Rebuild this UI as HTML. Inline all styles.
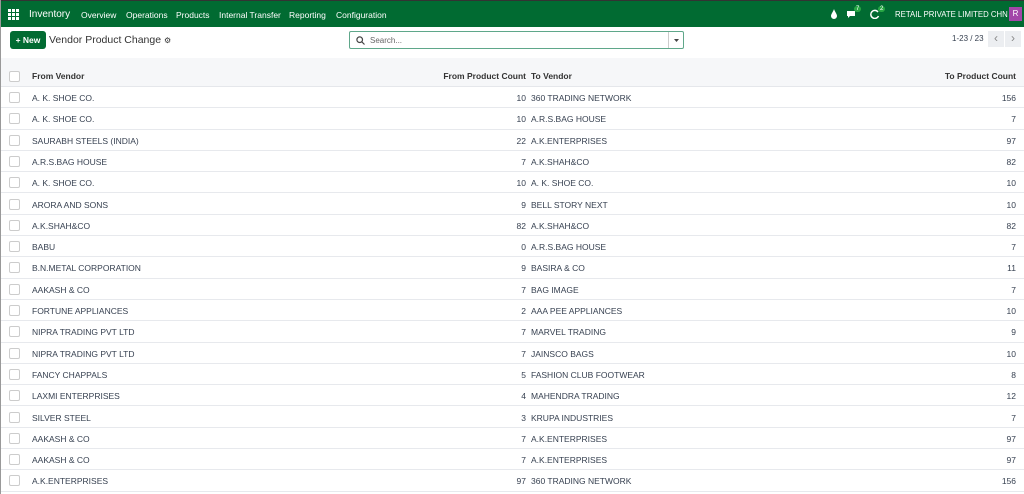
<!DOCTYPE html>
<html><head><meta charset="utf-8"><style>
*{box-sizing:border-box;margin:0;padding:0}
body{width:1024px;height:494px;overflow:hidden;font-family:"Liberation Sans",sans-serif;font-size:8.5px;color:#374151;background:#fff;position:relative}
.lb{position:absolute;left:0;top:0;width:1px;height:494px;background:#999;z-index:5}
.nav{height:27px;background:#016b32;color:#fff;position:relative;border-top:1px solid #333}
.nav .m{position:absolute;top:9px;font-size:8.5px}
.cp{height:31px;position:relative}
.btn{position:absolute;left:10px;top:4px;width:36px;height:18px;background:#016b32;border-radius:3px;color:#fff;font-weight:bold;font-size:8.5px;line-height:18px;text-align:center}
.title{position:absolute;left:49px;top:7px;font-size:10.5px;color:#333}
.search{position:absolute;left:349px;top:4px;width:335px;height:18px;border:1px solid #5fa78a;border-radius:2px}
.search span{position:absolute;left:20px;top:4px;color:#666;font-size:8px}
.search i{position:absolute;right:0;top:0;width:15px;height:16px;border-left:1px solid #ccc}
.hdr{position:absolute;top:58px;left:0;width:1024px;height:29px;background:#f6f7f9;border-bottom:1px solid #e5e7eb}
.row{position:absolute;left:0;width:1024px;height:21.3px;border-bottom:1px solid #e7e9ed}
.cb{position:absolute;left:9px;width:11px;height:11px;border:1px solid #ccc;border-radius:2px;background:#fff}
.t{position:absolute;white-space:nowrap}
.r{text-align:right}
b{font-weight:bold;color:#333}
.pg{position:absolute;top:4px;width:16px;height:16px;background:#eceef1;color:#888;font-size:12px;line-height:14px;text-align:center}
</style></head><body>
<div class="lb"></div>
<div class="nav">
<svg style="position:absolute;left:8px;top:8px" width="11" height="11"><g fill="#fff"><rect x="0" y="0" width="3" height="3"/><rect x="4" y="0" width="3" height="3"/><rect x="8" y="0" width="3" height="3"/><rect x="0" y="4" width="3" height="3"/><rect x="4" y="4" width="3" height="3"/><rect x="8" y="4" width="3" height="3"/><rect x="0" y="8" width="3" height="3"/><rect x="4" y="8" width="3" height="3"/><rect x="8" y="8" width="3" height="3"/></g></svg>
<span class="m" style="left:29px;font-size:10px;top:8px">Inventory</span>
<span class="m" style="left:81px">Overview</span>
<span class="m" style="left:126px">Operations</span>
<span class="m" style="left:176px">Products</span>
<span class="m" style="left:219px">Internal Transfer</span>
<span class="m" style="left:289px">Reporting</span>
<span class="m" style="left:336px">Configuration</span>
<svg style="position:absolute;left:830px;top:8px" width="8" height="10"><path d="M4 0C3 3 1 5 1 7a3 3 0 0 0 6 0C7 5 5 3 4 0z" fill="#fff"/></svg>
<svg style="position:absolute;left:846px;top:9px" width="11" height="9"><path d="M1 1h8v5H4L2 8V6H1z" fill="#fff"/></svg><span style="position:absolute;left:854px;top:5px;background:#28a745;border-radius:5px;font-size:6px;padding:0 2px">7</span>
<svg style="position:absolute;left:870px;top:8px" width="10" height="10"><path d="M8 3A4 4 0 1 0 8.5 7" fill="none" stroke="#fff" stroke-width="1.5"/></svg><span style="position:absolute;left:878px;top:5px;background:#28a745;border-radius:5px;font-size:6px;padding:0 2px">2</span>
<span class="m" style="left:895px;font-size:7.8px">RETAIL PRIVATE LIMITED CHN</span>
<span style="position:absolute;left:1009px;top:6px;width:13px;height:14px;background:#a347a9;color:#fff;font-size:8px;text-align:center;line-height:14px">R</span>
</div>
<div class="cp">
<div class="btn">+ New</div>
<div class="title">Vendor Product Change <span style="font-size:8px">⚙</span></div>
<div class="search"><svg style="position:absolute;left:6px;top:4px" width="9" height="9"><circle cx="3.7" cy="3.7" r="2.8" fill="none" stroke="#444" stroke-width="1.2"/><line x1="5.8" y1="5.8" x2="8.5" y2="8.5" stroke="#444" stroke-width="1.2"/></svg><span>Search...</span><i><svg width="15" height="16"><path d="M5 7h5l-2.5 3z" fill="#444"/></svg></i></div>
<span class="t" style="left:952px;top:7px;font-size:8px">1-23 / 23</span>
<div class="pg" style="left:988px">&lsaquo;</div><div class="pg" style="left:1005px">&rsaquo;</div>
</div>
<div class="hdr"><div class="cb" style="top:13px"></div>
<b class="t" style="left:32px;top:13px">From Vendor</b>
<b class="t r" style="right:498px;top:13px">From Product Count</b>
<b class="t" style="left:531px;top:13px">To Vendor</b>
<b class="t r" style="right:8px;top:13px">To Product Count</b></div>
<div id="rows"></div>
<script>
const d=[["A. K. SHOE CO.",10,"360 TRADING NETWORK",156],["A. K. SHOE CO.",10,"A.R.S.BAG HOUSE",7],["SAURABH STEELS (INDIA)",22,"A.K.ENTERPRISES",97],["A.R.S.BAG HOUSE",7,"A.K.SHAH&CO",82],["A. K. SHOE CO.",10,"A. K. SHOE CO.",10],["ARORA AND SONS",9,"BELL STORY NEXT",10],["A.K.SHAH&CO",82,"A.K.SHAH&CO",82],["BABU",0,"A.R.S.BAG HOUSE",7],["B.N.METAL CORPORATION",9,"BASIRA & CO",11],["AAKASH & CO",7,"BAG IMAGE",7],["FORTUNE APPLIANCES",2,"AAA PEE APPLIANCES",10],["NIPRA TRADING PVT LTD",7,"MARVEL TRADING",9],["NIPRA TRADING PVT LTD",7,"JAINSCO BAGS",10],["FANCY CHAPPALS",5,"FASHION CLUB FOOTWEAR",8],["LAXMI ENTERPRISES",4,"MAHENDRA TRADING",12],["SILVER STEEL",3,"KRUPA INDUSTRIES",7],["AAKASH & CO",7,"A.K.ENTERPRISES",97],["AAKASH & CO",7,"A.K.ENTERPRISES",97],["A.K.ENTERPRISES",97,"360 TRADING NETWORK",156]];
let h="";d.forEach((r,i)=>{const top=87+i*21.3;h+=`<div class="row" style="top:${top}px"><div class="cb" style="top:5px"></div><span class="t" style="left:32px;top:6px">${r[0].replace(/&/g,'&amp;')}</span><span class="t r" style="right:498px;top:6px">${r[1]}</span><span class="t" style="left:531px;top:6px">${r[2].replace(/&/g,'&amp;')}</span><span class="t r" style="right:8px;top:6px">${r[3]}</span></div>`});
document.getElementById("rows").innerHTML=h;
</script>
</body></html>
